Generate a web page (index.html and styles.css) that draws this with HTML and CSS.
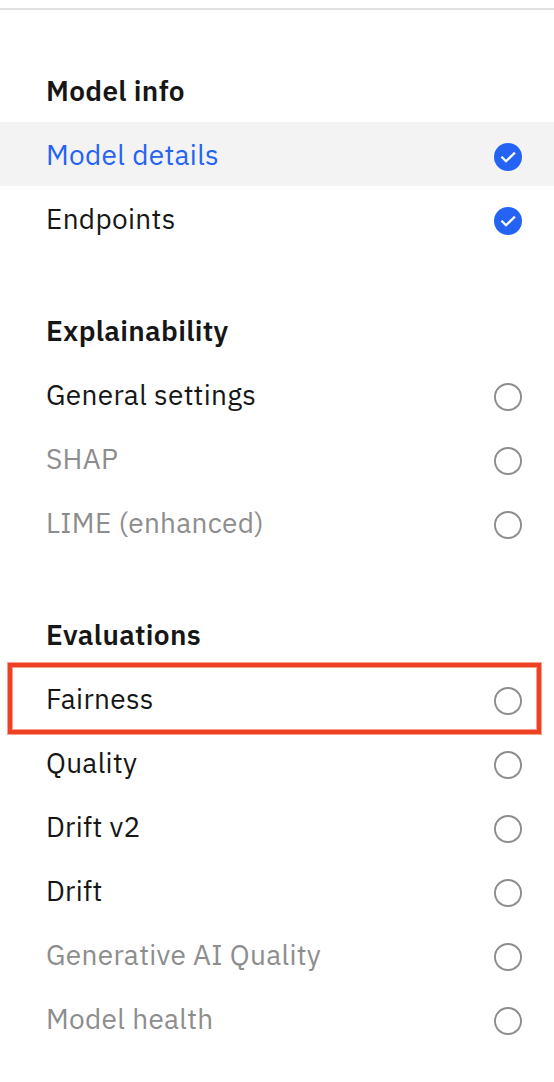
FILE: index.html
```html
<!DOCTYPE html>
<html lang="en">
<head>
<meta charset="utf-8">
<title>Model configuration</title>
<link rel="stylesheet" href="styles.css">
</head>
<body>
<svg class="sprite" aria-hidden="true">
  <symbol id="done" viewBox="0 0 16 16"><circle cx="8" cy="8" r="7" fill="#2563f5"/><path fill="none" stroke="#fff" stroke-width="1.12" d="M4.75 7.9L7 10.15l4.45-4.35"/></symbol>
  <symbol id="todo" viewBox="0 0 32 32"><circle cx="16" cy="16" r="13.05" fill="none" stroke="#8d8d8d" stroke-width="1.9"/></symbol>
</svg>
<nav class="panel">
  <section class="group">
    <h2 class="title">Model info</h2>
    <a class="item active"><span>Model details</span><svg class="status"><use href="#done"/></svg></a>
    <a class="item"><span>Endpoints</span><svg class="status"><use href="#done"/></svg></a>
  </section>
  <section class="group">
    <h2 class="title">Explainability</h2>
    <a class="item"><span>General settings</span><svg class="status"><use href="#todo"/></svg></a>
    <a class="item disabled"><span>SHAP</span><svg class="status"><use href="#todo"/></svg></a>
    <a class="item disabled"><span>LIME (enhanced)</span><svg class="status"><use href="#todo"/></svg></a>
  </section>
  <section class="group">
    <h2 class="title">Evaluations</h2>
    <a class="item highlighted"><span>Fairness</span><svg class="status"><use href="#todo"/></svg></a>
    <a class="item"><span>Quality</span><svg class="status"><use href="#todo"/></svg></a>
    <a class="item"><span>Drift v2</span><svg class="status"><use href="#todo"/></svg></a>
    <a class="item"><span>Drift</span><svg class="status"><use href="#todo"/></svg></a>
    <a class="item disabled"><span>Generative AI Quality</span><svg class="status"><use href="#todo"/></svg></a>
    <a class="item disabled"><span>Model health</span><svg class="status"><use href="#todo"/></svg></a>
  </section>
</nav>
</body>
</html>
```
FILE: styles.css
```css
* { box-sizing: border-box; }
body {
  margin: 0;
  padding-top: 8px;
  background: #fff;
  color: #161616;
  font: 400 28px/36px "IBM Plex Sans", Roboto, "Noto Sans", sans-serif;
  letter-spacing: 0.32px;
}
.sprite { display: none; }
.panel {
  display: flex;
  flex-direction: column;
  gap: 48px;
  height: 1074px;
  padding-top: 48px;
  border-top: 2px solid #e0e0e0;
}
.group { display: flex; flex-direction: column; }
.title, .item {
  display: flex;
  align-items: center;
  justify-content: space-between;
  height: 64px;
  margin: 0;
  padding: 1px 30px 0 46px;
  font-size: 28px;
  white-space: nowrap;
}
.title { font-weight: 600; }
.active { background: #f3f3f3; color: #2563f5; }
.disabled { color: #8d8d8d; }
.status { width: 32px; height: 32px; margin-top: 5px; flex: none; }
.highlighted { position: relative; }
.highlighted::after {
  content: "";
  position: absolute;
  inset: -3px 13px -4px 8px;
  border: 4px solid #ee4023;
  box-shadow: 0 0 0 1px rgba(238, 64, 35, 0.5), inset 0 0 0 1px rgba(238, 64, 35, 0.5);
}
```
